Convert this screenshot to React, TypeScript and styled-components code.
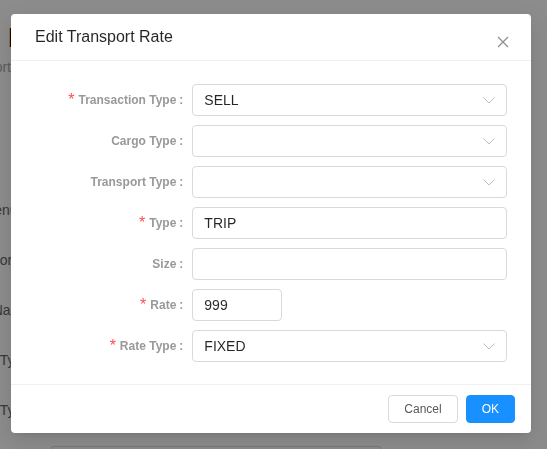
import styled, { createGlobalStyle } from "styled-components";

const GlobalStyle = createGlobalStyle`
  html, body {
    margin: 0;
    padding: 0;
  }
  body {
    background: #fff;
    font-family: "Liberation Sans", Arial, sans-serif;
    color: rgba(0, 0, 0, 0.85);
  }
  * {
    box-sizing: border-box;
  }
`;

/* ---------- page behind the modal ---------- */

const Page = styled.div`
  height: 449px;
  overflow: hidden;
  padding-top: 21px;
`;

const Heading = styled.h1`
  margin: 0 0 0 8px;
  font-size: 28px;
  line-height: 34px;
  font-weight: 700;
  color: #000;
  white-space: nowrap;
`;

const BgLabel = styled.div<{ $edge: number }>`
  width: ${({ $edge }) => $edge}px;
  display: flex;
  justify-content: flex-end;
  white-space: nowrap;
  font-size: 14px;
  color: #666;
`;

const BgSubtitle = styled(BgLabel)`
  margin-top: 2px;
  line-height: 20px;
  color: #aaa;
`;

const BgForm = styled.div`
  margin-top: 108px;
  display: flex;
  flex-direction: column;
`;

const BgRow = styled.div`
  height: 50px;
  display: flex;
  align-items: center;
`;

const BgInput = styled.div`
  margin: 11px 0 0 50px;
  width: 332px;
  height: 32px;
  border: 1px solid #d9d9d9;
  border-radius: 4px;
`;

/* ---------- modal ---------- */

const Mask = styled.div`
  position: fixed;
  inset: 0;
  background: rgba(0, 0, 0, 0.45);
`;

const ModalLayer = styled.div`
  position: fixed;
  inset: 0;
  padding: 14px 0 0 11px;
`;

const Modal = styled.div`
  position: relative;
  width: 520px;
  background: #fff;
  border-radius: 4px;
  box-shadow: 0 3px 6px -4px rgba(0, 0, 0, 0.12),
    0 6px 16px 0 rgba(0, 0, 0, 0.08), 0 9px 28px 8px rgba(0, 0, 0, 0.05);
`;

const Header = styled.div`
  padding: 12px 24px;
  border-bottom: 1px solid #f0f0f0;
`;

const Title = styled.div`
  font-size: 16px;
  line-height: 22px;
  font-weight: 500;
  color: rgba(0, 0, 0, 0.85);
`;

const CloseButton = styled.button`
  position: absolute;
  top: 0;
  right: 0;
  width: 56px;
  height: 56px;
  padding: 0;
  border: 0;
  background: transparent;
  display: flex;
  align-items: center;
  justify-content: center;
  color: rgba(0, 0, 0, 0.45);
  cursor: pointer;
`;

const Body = styled.div`
  padding: 23px 24px 22px;
  display: flex;
  flex-direction: column;
  gap: 9px;
`;

const FormRow = styled.div`
  display: grid;
  grid-template-columns: 1fr 2fr;
  height: 32px;
`;

const Label = styled.label`
  display: flex;
  align-items: center;
  justify-content: flex-end;
  padding-bottom: 1px;
  white-space: nowrap;
  font-size: 12px;
  font-weight: 700;
  color: #999;
`;

const Required = styled.span`
  margin-right: 4px;
  font-size: 16px;
  line-height: 1;
  font-weight: 400;
  color: #ff4d4f;
`;

const Colon = styled.span`
  margin: 0 9px 0 3px;
`;

const SelectBox = styled.div`
  height: 32px;
  padding: 0 11px;
  display: flex;
  align-items: center;
  justify-content: space-between;
  border: 1px solid #d9d9d9;
  border-radius: 4px;
  background: #fff;
  font-size: 14px;
  color: rgba(0, 0, 0, 0.85);
`;

const Arrow = styled.svg`
  flex-shrink: 0;
  color: rgba(0, 0, 0, 0.25);
`;

const TextInput = styled.input<{ $narrow?: boolean }>`
  width: ${({ $narrow }) => ($narrow ? "90px" : "100%")};
  height: 32px;
  padding: 0 11px;
  border: 1px solid #d9d9d9;
  border-radius: 4px;
  outline: none;
  background: #fff;
  font-family: inherit;
  font-size: 14px;
  color: rgba(0, 0, 0, 0.85);
`;

const Footer = styled.div`
  padding: 10px 16px;
  border-top: 1px solid #f0f0f0;
  display: flex;
  justify-content: flex-end;
  gap: 8px;
`;

const Button = styled.button<{ $primary?: boolean }>`
  height: 28px;
  padding: 0 15px;
  border-radius: 4px;
  border: 1px solid ${({ $primary }) => ($primary ? "#1890ff" : "#d9d9d9")};
  background: ${({ $primary }) => ($primary ? "#1890ff" : "#fff")};
  color: ${({ $primary }) => ($primary ? "#fff" : "#595959")};
  font-family: inherit;
  font-size: 12px;
  cursor: pointer;
`;

type Field = {
  label: string;
  kind: "select" | "input";
  value?: string;
  required?: boolean;
  narrow?: boolean;
};

const fields: Field[] = [
  { label: "Transaction Type", kind: "select", value: "SELL", required: true },
  { label: "Cargo Type", kind: "select" },
  { label: "Transport Type", kind: "select" },
  { label: "Type", kind: "input", value: "TRIP", required: true },
  { label: "Size", kind: "input" },
  { label: "Rate", kind: "input", value: "999", required: true, narrow: true },
  { label: "Rate Type", kind: "select", value: "FIXED", required: true },
];

const bgLabels = ["Payment Tenure", "Vendor ID", "Vendor Name", "Cargo Type", "Rate Type"];

function ChevronDown() {
  return (
    <Arrow width="12" height="12" viewBox="0 0 12 12" fill="none">
      <polyline
        points="0.5,3.5 6,9 11.5,3.5"
        stroke="currentColor"
        strokeWidth="1"
      />
    </Arrow>
  );
}

function CloseIcon() {
  return (
    <svg width="12" height="12" viewBox="0 0 12 12" fill="none">
      <path d="M1 1 L11 11 M11 1 L1 11" stroke="currentColor" strokeWidth="1.2" />
    </svg>
  );
}

export default function App() {
  return (
    <>
      <GlobalStyle />
      <Page>
        <Heading>Edit Transport Rates</Heading>
        <BgSubtitle $edge={11}>Transport</BgSubtitle>
        <BgForm>
          {bgLabels.map((l, i) => (
            <BgRow key={i}>
              <BgLabel $edge={30}>{l}</BgLabel>
            </BgRow>
          ))}
        </BgForm>
        <BgInput />
      </Page>

      <Mask />
      <ModalLayer>
        <Modal>
          <Header>
            <Title>Edit Transport Rate</Title>
          </Header>
          <CloseButton aria-label="Close">
            <CloseIcon />
          </CloseButton>
          <Body>
            {fields.map((f) => (
              <FormRow key={f.label}>
                <Label>
                  {f.required && <Required>*</Required>}
                  {f.label}
                  <Colon>:</Colon>
                </Label>
                <div>
                  {f.kind === "select" ? (
                    <SelectBox>
                      <span>{f.value}</span>
                      <ChevronDown />
                    </SelectBox>
                  ) : (
                    <TextInput $narrow={f.narrow} value={f.value ?? ""} readOnly />
                  )}
                </div>
              </FormRow>
            ))}
          </Body>
          <Footer>
            <Button>Cancel</Button>
            <Button $primary>OK</Button>
          </Footer>
        </Modal>
      </ModalLayer>
    </>
  );
}
